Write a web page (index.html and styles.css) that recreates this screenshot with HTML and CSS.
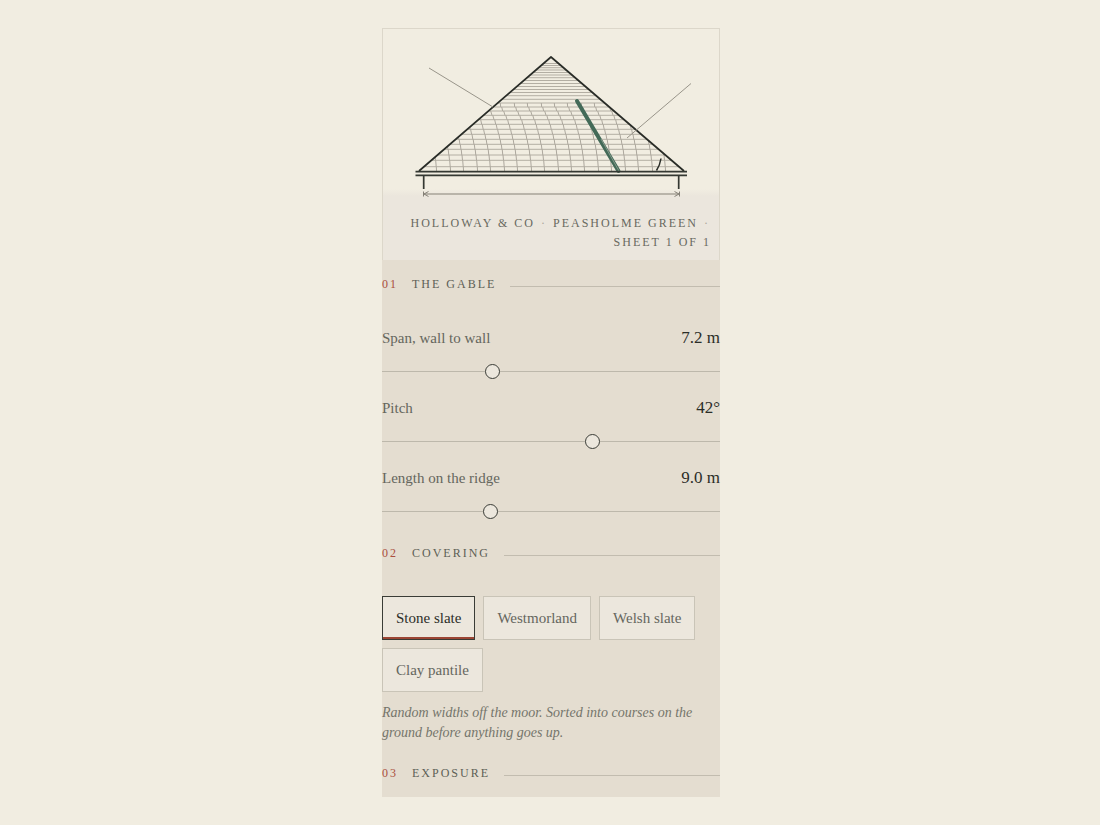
FILE: index.html
```html
<!DOCTYPE html>
<html lang="en">
<head>
  <meta charset="UTF-8" />
  <meta name="viewport" content="width=device-width, initial-scale=1.0"/>
  <title>Holloway &amp; Co - Peasholme Green</title>
  <link rel="stylesheet" href="styles.css">
</head>
<body>

  <main class="sheet">
    <figure class="drawing">
      <svg class="gable" viewBox="0 0 336 172" role="img" aria-label="Gable elevation">
        <defs>
          <clipPath id="roof"><path d="M168 28 L301 142 H36 Z"/></clipPath>
          <path id="joint" d="M.300 74l.4 4M1.700 78l1 4M3.700 82l1.300 4.300M5.800 86.300l1.200 4.400M7.700 90.700l1 4.600M9.200 95.300l1 5M10.600 100.300l1 5M12 105.300l.8 5M13.200 110.300l.7 5M14.300 115.300l.6 5M15.200 120.300l.6 5.700M16 126l.5 5.300M16.700 131.300l.5 6.400M17.300 137.700l.3 5"/>
        </defs>

        <!-- slate courses, closing up towards the ridge -->
        <g clip-path="url(#roof)">
          <path class="course" d="M30 137.700H306M30 131.300H306M30 126H306M30 120.300H306M30 115.300H306M30 110.300H306M30 105.300H306M30 100.300H306M30 95.300H306M30 90.700H306M30 86.300H306M30 82H306M30 78H306M30 74H306M30 70.300H306M30 66.700H306M30 63.500H306M30 60.500H306M30 57.500H306M30 54.500H306M30 51.500H306M30 48.700H306M30 46H306M30 43.500H306M30 41H306M30 38.700H306M30 36.500H306M30 34.500H306"/>
          <g class="joints">
            <use href="#joint" x="36"/>
            <use href="#joint" x="50"/>
            <use href="#joint" x="63"/>
            <use href="#joint" x="77"/>
            <use href="#joint" x="90"/>
            <use href="#joint" x="104"/>
            <use href="#joint" x="117"/>
            <use href="#joint" x="131"/>
            <use href="#joint" x="144"/>
            <use href="#joint" x="158"/>
            <use href="#joint" x="171"/>
            <use href="#joint" x="184"/>
            <use href="#joint" x="198"/>
            <use href="#joint" x="211"/>
            <use href="#joint" x="225"/>
            <use href="#joint" x="238"/>
            <use href="#joint" x="252"/>
            <use href="#joint" x="265"/>
          </g>
        </g>

        <!-- valley lead -->
        <path class="lead" d="M194 72 L235.500 142"/>
        <path class="lead-core" d="M218 110 L236 142"/>

        <!-- roof, eaves and walls -->
        <path class="rafters" d="M36 142 L168 28 L301 142"/>
        <path class="eaves" d="M32.500 142.700H304M32.500 146.300H304M40.700 146V160M295.700 146V160"/>
        <path class="angle" d="M278 129.500 Q277 136 273.500 141.500"/>

        <path class="leader" d="M46 39 L110 78M308 54.500 L244 109"/>
        <path class="dimension" d="M41 165H296M40.500 162.500V167.500M296.500 162.500V167.500M45.500 162.500L41 165L45.500 167.500M291.500 162.500L296 165L291.500 167.500"/>
      </svg>
      <figcaption class="title-block">
        Holloway &amp; Co <span class="dot">·</span> Peasholme Green <span class="dot">·</span> Sheet 1 of 1
      </figcaption>
    </figure>

    <form class="controls">
      <section>
        <h2 class="section-head"><span class="num">01</span><span>The gable</span></h2>
        <div class="sliders">
          <div class="slider">
            <label for="span">Span, wall to wall</label>
            <output for="span">7.2 m</output>
            <input type="range" id="span" min="4" max="14" step="0.1" value="7.2">
          </div>
          <div class="slider">
            <label for="pitch">Pitch</label>
            <output for="pitch">42°</output>
            <input type="range" id="pitch" min="20" max="55" step="1" value="42">
          </div>
          <div class="slider">
            <label for="ridge">Length on the ridge</label>
            <output for="ridge">9.0 m</output>
            <input type="range" id="ridge" min="4" max="20" step="0.5" value="9">
          </div>
        </div>
      </section>

      <section>
        <h2 class="section-head"><span class="num">02</span><span>Covering</span></h2>
        <div class="options">
          <button type="button" class="option active" aria-pressed="true">Stone slate</button>
          <button type="button" class="option" aria-pressed="false">Westmorland</button>
          <button type="button" class="option" aria-pressed="false">Welsh slate</button>
          <button type="button" class="option" aria-pressed="false">Clay pantile</button>
        </div>
        <p class="note">Random widths off the moor. Sorted into courses on the ground before anything goes up.</p>
      </section>

      <section>
        <h2 class="section-head"><span class="num">03</span><span>Exposure</span></h2>
      </section>
    </form>
  </main>

</body>
</html>
```
FILE: styles.css
```css
* {
  margin: 0;
  padding: 0;
  box-sizing: border-box;
}

body {
  font-family: "Liberation Serif", serif;
  font-size: 15px;
  color: #2b2d28;
  background: #f1ede1;
  padding: 28px 28px 28px 30px;
}

.sheet {
  width: 100%;
  max-width: 338px;
  margin: 0 auto;
}

.drawing {
  border: 1px solid #dcd7ca;
  border-bottom: 0;
  background: linear-gradient(#f1ede1 160px, #ebe6dd 167px);
}

.gable {
  display: block;
  width: 100%;
  fill: none;
}

.course {
  stroke: #b3aea3;
  stroke-width: 1;
}

.joints {
  stroke: #aca79d;
  stroke-width: 1;
}

.lead {
  stroke: #436a58;
  stroke-width: 4;
  stroke-linecap: round;
}

.lead-core {
  stroke: #83998a;
  stroke-width: 1;
}

.rafters {
  stroke: #292c27;
  stroke-width: 1.7;
  stroke-linejoin: round;
}

.eaves {
  stroke: #343832;
  stroke-width: 1.7;
}

.angle {
  stroke: #292c27;
  stroke-width: 1.5;
}

.leader {
  stroke: #99958a;
  stroke-width: 1;
}

.dimension {
  stroke: #858177;
  stroke-width: 1;
}

.title-block {
  padding: 13px 8px 8px;
  font-size: 12px;
  line-height: 19px;
  letter-spacing: 2px;
  text-align: right;
  text-transform: uppercase;
  color: #68695f;
}

.dot {
  margin: 0 1px;
  color: #aaa69a;
}

.controls {
  background: #e4ddd0;
}

.section-head {
  display: flex;
  align-items: center;
  gap: 14px;
  height: 48px;
  font-size: 12px;
  font-weight: 400;
  letter-spacing: 2px;
  text-transform: uppercase;
  color: #5d5f56;
}

.section-head::after {
  content: "";
  flex: 1;
  height: 1px;
  margin-top: 4px;
  background: #c2bcaf;
}

.num {
  color: #ab4f40;
}

.sliders {
  display: grid;
  gap: 10px;
  padding: 18px 0 3px;
}

.slider {
  display: grid;
  grid-template-columns: 1fr auto;
  align-items: center;
}

.slider label {
  color: #65665d;
}

.slider output {
  font-size: 17px;
  line-height: 24px;
}

.slider input {
  grid-column: 1 / -1;
  appearance: none;
  width: 100%;
  height: 16px;
  margin: 13px 0 7px;
  background: linear-gradient(#bdb8ab, #bdb8ab) center / 100% 1px no-repeat;
  cursor: pointer;
}

.slider input::-webkit-slider-thumb {
  appearance: none;
  width: 15px;
  height: 15px;
  border: 1px solid #3a3c36;
  border-radius: 50%;
  background: #ece7dd;
}

.options {
  display: flex;
  flex-wrap: wrap;
  gap: 8px;
  padding-top: 19px;
}

.option {
  height: 44px;
  padding: 0 13px;
  font: inherit;
  color: #65665d;
  background: #ece7dd;
  border: 1px solid #c9c4b7;
  cursor: pointer;
}

.option.active {
  color: #2b2d28;
  border-color: #3a3c36;
  box-shadow: inset 0 -2px #9c4534;
}

.note {
  margin: 11px 0 6px;
  font-size: 14px;
  font-style: italic;
  line-height: 20px;
  color: #74756b;
}
```
